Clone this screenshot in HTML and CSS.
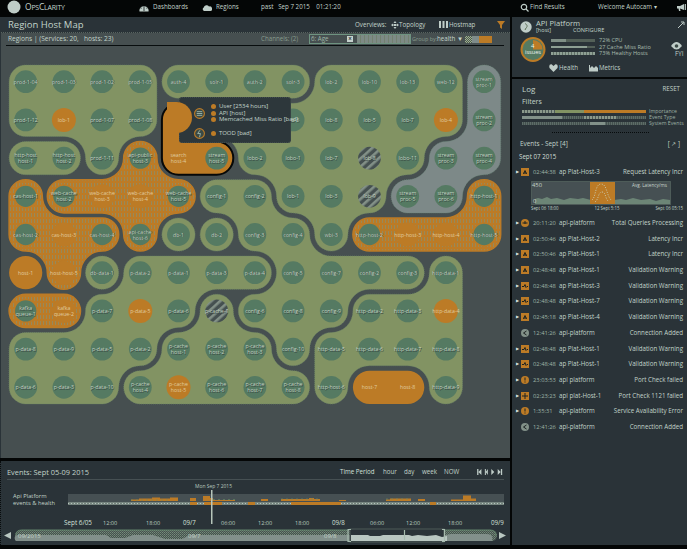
FILE: index.html
```html
<!DOCTYPE html>
<html lang="en">
<head>
<meta charset="utf-8">
<title>OpsClarity - Region Host Map</title>
<link rel="stylesheet" href="styles.css">
</head>
<body>
<div class="app">
  <header class="top">
    <svg class="logo" viewBox="0 0 14 14"><circle cx="7" cy="7" r="6.5"/></svg>
    <span class="brand">O<small>PS</small>C<small>LARITY</small></span>
    <svg class="ic" viewBox="0 0 10 9"><path d="M.5 8.5A4.6 4.6 0 1 1 9.5 8.5Z"/><path class="cut" d="M5 8V3M1.6 5.2h1M7.4 5.2h1M2.8 2.6l.6.7M7.2 2.6l-.6.7"/></svg>
    <span>Dashboards</span>
    <svg class="ic" viewBox="0 0 10 9"><path d="M2 8a2 2 0 0 1-.3-3.6A3 3 0 0 1 7 3.5 2.3 2.3 0 0 1 8.5 8Z"/></svg>
    <span>Regions</span>
    <span class="date">past &nbsp; Sep 7 2015 &nbsp;&nbsp; 01:21:20</span>
    <svg class="ic" viewBox="0 0 10 9"><circle class="line" cx="4" cy="4" r="2.7"/><path class="line" d="M6 6l2.5 2.5"/></svg>
    <span>Find Results</span>
    <span class="user">Welcome Autocam <b>▾</b></span>
    <svg class="ic" viewBox="0 0 10 9"><path d="M1 3h3l4-2v6L4 5.5 4.500 8H3L2.500 5.500H1Z"/><path class="line" d="M9.300 1v6"/></svg>
  </header>

  <main class="map-panel">
    <div class="title-bar">
      <h1>Region Host Map</h1>
      <span>Overviews:</span>
      <svg class="ic8" viewBox="0 0 8 8"><path d="M4 0l1.500 2H2.500zM4 8l1.500-2H2.500zM0 4l2-1.500v3zM8 4L6 2.500v3zM2.500 3h3v2h-3z"/></svg>
      <span>Topology</span>
      <svg class="ic8 wide" viewBox="0 0 9 7"><path d="M0 0h2v7H0zM3.500 0h2v7h-2zM7 0h2v7H7z"/></svg>
      <span>Hostmap</span>
      <svg class="ic8 funnel" viewBox="0 0 8 8"><path d="M0 0h8L5 4v4L3 6.500V4Z"/></svg>
    </div>
    <div class="sub-bar">
      <span class="crumb">Regions | (Services: 20, &nbsp; hosts: 23)</span>
      <span class="dim">Channels: (2)</span>
      <div class="search"><span>6: Age</span><b>×</b><i></i></div>
      <span class="dim">Group by:</span>
      <span>health ▼</span>
      <div class="swatches"><i class="s1"></i><i class="s2"></i><i class="s3"></i></div>
    </div>
    <div class="canvas">
      <svg id="map" width="510" height="409" viewBox="0 49 510 409">
        <defs>
          <pattern id="stripe" width="3" height="6" patternUnits="userSpaceOnUse"><rect width="3" height="6" fill="#bc7b26"/><rect x="1" width="1" height="4" fill="#97895a"/></pattern>
          <pattern id="slash" width="6" height="6" patternUnits="userSpaceOnUse" patternTransform="rotate(48)"><rect width="6" height="6" fill="#455050"/><rect width="2.600" height="6" fill="#829087"/></pattern>
        </defs>
      </svg>
      <div class="tooltip">
        <svg viewBox="0 0 14 14"><circle class="ring" cx="7" cy="7" r="5.300"/><path class="mark" d="M4 5h6M4 7h6M4 9h6"/></svg>
        <ul><li>User [2534 hours]</li><li>API [host]</li><li>Memcached Miss Ratio [bad]</li></ul>
        <svg viewBox="0 0 14 14"><circle class="ring" cx="7" cy="7" r="5.300"/><path class="mark" d="M7.500 3.500L5 7h3l-1 4"/></svg>
        <ul><li>TOOD [bad]</li></ul>
      </div>
    </div>
  </main>

  <section class="timeline">
    <div class="tl-head">
      <h2>Events: Sept 05-09 2015</h2>
      <span class="period">Time Period</span><span>hour</span><span>day</span><span>week</span><span>NOW</span>
      <svg class="ctrl" viewBox="0 0 30 7"><path d="M0 0h1.500v7H0zM5 0v7L1.500 3.500zM9 0h1.200v7H9zM12.500 0v7L10 3.500zM16.500 0v7L20 3.500zM24 0v7l3.500-3.500zM27.700 0h1.500v7h-1.500z"/></svg>
    </div>
    <div class="tl-body">
      <div class="tl-label">Api Platform<br>events &amp; health</div>
      <svg class="chart" width="436" height="46" viewBox="0 0 436 46">
        <rect class="band" y="11" width="436" height="8"/>
        <rect class="base" y="19" width="436" height="3"/>
        <path class="dots" d="M0 20.500H436"/>
        <path class="hot" d="M63 18v-1.500h8v-1h13v-1h8v1h10v-1h8v3.500zM122 18v-3h6v3zM135 18v-5h7v2h3v2h22v1zM193 18v-2h7v2zM213 18v-2h28v-1h5v1h6v2zM271 18v-1h7v1zM318 18v-1.500h4v-1h21v2.500zM350 18v-2h7v2zM383 18v-1.500h12v-4h8v3h5v2.500z"/>
        <path class="hot" d="M122 19h7v3h-7zM136 19h18v3h-18zM180 19h7v3h-7zM223 19h50v3h-50zM362 19h6v3h-6z"/>
        <path class="greenline" d="M63 17h40M145 16.500h22M318 16h24M213 16h38"/>
        <rect class="cursor" x="143" y="7" width="1.500" height="34"/>
        <text x="127" y="5" textLength="37" lengthAdjust="spacingAndGlyphs">Mon Sep 7 2015</text>
        <g class="ticks">
          <text class="day" x="-4" y="42" textLength="28" lengthAdjust="spacingAndGlyphs">Sept 6/05</text><text x="35" y="42">12:00</text><text x="78" y="42">18:00</text><text class="day" x="115" y="42">09/7</text><text x="153" y="42">06:00</text><text x="190" y="42">12:00</text><text x="227" y="42">18:00</text><text class="day" x="264" y="42">09/8</text><text x="302" y="42">06:00</text><text x="338" y="42">12:00</text><text x="380" y="42">18:00</text><text class="day" x="423" y="42">09/9</text>
        </g>
      </svg>
    </div>
    <svg class="scrub" width="510" height="17" viewBox="0 0 510 17">
      <defs><pattern id="check" width="2" height="2" patternUnits="userSpaceOnUse"><rect width="2" height="2" fill="#46514e"/><rect width="1" height="1" fill="#758d7b"/><rect x="1" y="1" width="1" height="1" fill="#65796c"/></pattern></defs>
      <rect x="15" y="2" width="482" height="11" rx="5.500" fill="url(#check)"/>
      <path class="area" d="M16 13c-2-2-2-6 2-6h88l5 3h14l8-3h20l12 4h17l8-4h165v6zM391 13V8h50l10-2h35q8 0 6 7Z"/>
      <path class="edge" d="M16 7q0-5 6-5H347M445 2h45q6 0 6 6"/>
      <rect x="350" y="1" width="94" height="13" class="window"/>
      <path class="light" d="M351 13V7h17l2 1h10l3-1h26l3 1 6-1 9 1 9-1 6 2 5-1v5z"/>
      <path class="pin" d="M404.500 2v10M351 1.500h-3v12h3M442 1.500h2.500v12H442"/>
      <path class="light" d="M4 7.500L11 4v7zM499 4l7 3.500-7 3.500z"/>
      <text x="18" y="10">09/2015</text><text x="188" y="10">09/7</text><text x="324" y="10">09/8</text>
    </svg>
  </section>

  <aside class="side">
    <section class="service">
      <div class="svc-head">
        <svg width="12" height="12" viewBox="0 0 12 12"><circle cx="6" cy="6" r="5.700"/><path class="tick" d="M5 2.500c2 1 3 3 1 4.500L5 9"/></svg>
        <div><div class="svc-name">API Platform</div><div class="svc-sub"><span>[host]</span><span>CONFIGURE</span></div></div>
        <svg class="expand" width="8" height="8" viewBox="0 0 8 8"><path d="M1 7l5.500-5.500M4 1h3v3"/></svg>
      </div>
      <div class="svc-body">
        <svg width="26" height="27" viewBox="0 0 26 27"><circle class="g1" cx="13" cy="13.500" r="11.500"/><path class="g2" d="M13 13.500V4a9.500 9.500 0 0 1 9.500 9.500z"/><text x="11" y="12">4</text><text x="5" y="18" textLength="16" lengthAdjust="spacingAndGlyphs">issues</text></svg>
        <div class="meters"><i class="m1"></i><i class="m2"></i><i class="m3"></i></div>
        <div class="m-labels">72% CPU<br>27 Cache Miss Ratio<br>73% Healthy Hosts</div>
        <div class="watch"><svg width="11" height="8" viewBox="0 0 11 8"><path d="M0 4Q5.500-4 11 4 5.500 11 0 4Z"/><circle cx="5.500" cy="4" r="1.800"/></svg><span>FYI</span></div>
      </div>
      <div class="svc-tabs">
        <svg width="9" height="8" viewBox="0 0 9 8"><path d="M4.500 8L.5 4Q-.5 0 2.500.3L4.500 2 6.500.3Q9.500 0 8.500 4Z"/></svg><span>Health</span>
        <svg width="9" height="8" viewBox="0 0 9 8"><path d="M0 1v6.500h9V4L7 2 5 4 3 2 1 4V1Z"/></svg><span>Metrics</span>
      </div>
    </section>
    <section class="log">
      <div class="log-title"><h2>Log</h2><span>RESET</span></div>
      <h3>Filters</h3>
      <div class="filters">
        <div class="bar f1"><i></i><i></i><i></i></div><span>Importance</span>
        <div class="bar f2"><i></i><i></i><i></i><i></i></div><span>Event Type</span>
        <div class="bar f3"><i></i><i></i><i></i></div><span>System Events</span>
      </div>
      <div class="rule"></div>
      <div class="ev-title"><b>Events - Sept [4]</b><span>[ ↗ ]</span></div>
      <div class="ev-date">Sept 07 2015</div>
      <div class="events" id="events"></div>
      <template id="spark">
        <div class="spark">
          <svg width="140" height="24" viewBox="0 0 140 24">
            <rect class="sbg" x=".5" y=".5" width="139" height="23"/>
            <path class="grass" d="M4 23v-5l3-1 4 1 5-2 4 2 6-1 7 2 6-2 8 1 5-1 8 2v4zM83 23v-4l7-1 5 1 7-2 8 2 9-1 6 2 7-2 7 1v4z"/>
            <rect class="peak" x="59" y="1" width="25" height="22"/>
            <path class="curve" d="M61 19c4-3 3-16 9-16s5 10 10 16M64 21c4-3 3-10 7-10s3 6 6 9"/>
            <text x="1" y="6">450</text><text x="2" y="22">0</text><text x="101" y="6" textLength="35" lengthAdjust="spacingAndGlyphs">Avg. Latency/ms</text>
          </svg>
          <div class="spark-axis"><span>Sept 06 18:00</span><span>12 Sept 5:15</span><span>Sept 06 05:15</span></div>
        </div>
      </template>
    </section>
  </aside>
</div>
<script src="app.js"></script>
</body>
</html>
```
FILE: styles.css
```css
* { box-sizing: border-box; }
body { margin: 0; background: #040606; color: #c2d3ca; font: 6.2px/8px "Open Sans", "Noto Sans", sans-serif; overflow: hidden; }
h1, h2, h3, ul { margin: 0; padding: 0; font-weight: 400; }
svg { display: block; }
svg path, svg circle { fill: #bfcdc8; }
.app { width: 687px; height: 549px; display: grid; grid-template-columns: 510px 175px; grid-template-rows: 17px 441px 87px; column-gap: 2px; row-gap: 0; white-space: nowrap; }
.top { grid-column: 1 / 3; display: grid; grid-template-columns: 18px 114px 14px 49px 14px 45px 259px 10px 68px 78px 12px; padding-left: 7px; align-items: center; padding-bottom: 3px; }
.logo { width: 14px; height: 14px; }
.brand { font-size: 8.500px; letter-spacing: -.25px; }
.brand small { font-size: 7px; }
.ic { width: 10px; height: 9px; }
.ic .cut { fill: none; stroke: #121819; stroke-width: .8; }
.ic .line { fill: none; stroke: #bfcdc8; stroke-width: 1.200; }
.user b { font-weight: 400; }

.map-panel { background: #464f50; border-left: 1px solid #2a3338; }
.title-bar { height: 16px; background: #2a3338; display: grid; grid-template-columns: 347px 36px 8px 40px 10px 48px 10px; padding-left: 7px; align-items: center; border-bottom: 1px dotted #59645f; }
h1 { font-size: 9.500px; line-height: 14px; }
.ic8 { width: 8px; height: 8px; }
.ic8.wide { width: 9px; height: 7px; }
.funnel path { fill: #bc7b26; }
.sub-bar { height: 13px; display: grid; grid-template-columns: 253px 48px 103px 25px 28px 28px; margin: 0 6px 0 5px; padding-left: 2px; align-items: center; border-bottom: 1.500px solid #080d0e; }
.crumb { font-size: 6.600px; }
.dim { color: #879b8d; }
.search { width: 102px; height: 10px; border: 1px solid #6e9380; display: flex; align-items: center; color: #9eb5a6; }
.search span { width: 37px; padding-left: 1px; }
.search b { width: 6px; height: 6px; background: #c5d1cd; color: #303a3b; line-height: 6px; text-align: center; }
.search i { flex: 1; margin-left: 4px; height: 8px; background: repeating-linear-gradient(90deg, #7d8a85 0 3px, #72806f 3px 4px); }
.sub-bar .dim:nth-of-type(3) { font-size: 5.500px; }
.swatches { display: flex; height: 7px; margin-left: 0; }
.swatches i { width: 7px; }
.swatches .s1 { background: repeating-conic-gradient(#9fb18c 0 25%, #4b5853 0 50%) 0 0 / 2px 2px; }
.swatches .s2 { background: #7f8c8a; }
.swatches .s3 { width: 13px; background: #bc7b26; }
.canvas { position: relative; margin-left: -1px; height: 409px; overflow: hidden; }
.region-green { fill: #829363 !important; stroke: #6c8767; stroke-width: .7; stroke-dasharray: 1 1; }
.region-grey { fill: #7d8988 !important; stroke: #6c8a7a; stroke-width: .7; stroke-dasharray: 1 1; }
.region-stripe { fill: url(#stripe) !important; stroke: #bc7b26; stroke-width: 1.500; }
.region-solid { fill: #bc7b26 !important; }
.region-picked { fill: #bc7b26 !important; stroke: #060808; stroke-width: 2; }
#map .n { fill: #557a62; }
#map .nr { fill: #557a62; stroke: #bc7b26; stroke-width: 1.500; }
#map .w { fill: #bc7b26; }
#map .x { fill: url(#slash); }
#map text { font-size: 5.200px; text-anchor: middle; fill: #c4d4c5; text-shadow: .6px .8px 0 #33423d; }
#map text.hot { text-shadow: none; fill: #e0cda0; }
.tooltip { position: absolute; left: 179px; top: 51px; width: 112px; height: 46px; border-radius: 3px; background: #2d373b; border: 1px dotted #414c4d; display: grid; grid-template-columns: 14px 1fr; grid-template-rows: 22px 14px; column-gap: 4px; padding: 4px 0 0 13px; align-content: start; row-gap: 2px; align-items: center; }
.tooltip::before { content: ""; position: absolute; left: -13px; top: 4px; width: 25px; height: 31px; border-radius: 0 16px 16px 0; background: #bc7b26; }
.tooltip svg { width: 13px; height: 13px; position: relative; }
.tooltip .ring { fill: #3a4a46; stroke: #bc7b26; stroke-width: 1.200; }
.tooltip .mark { fill: none; stroke: #9db5a7; stroke-width: 1; }
.tooltip ul { list-style: none; line-height: 6.800px; font-size: 6px; letter-spacing: -.05px; }
.tooltip li::before { content: ""; display: inline-block; width: 5px; height: 5px; border-radius: 50%; background: #bc7b26; margin-right: 3px; vertical-align: -1px; }

.timeline { grid-row: 3; background: #2a3338; margin-top: 3px; border-left: 1px dotted #080c0d; }
.tl-head { height: 19px; display: grid; grid-template-columns: 333px 43px 21px 18px 22px 31px 30px; margin: 0 6px; align-items: center; border-bottom: 1px solid #465053; padding-top: 3px; }
.tl-head h2 { font-size: 7.400px; }
.tl-head .period { color: #d5e1da; }
.ctrl { width: 30px; height: 6px; }
.tl-body { display: flex; height: 48px; padding-top: 3px; }
.tl-label { width: 67px; padding: 10px 0 0 12px; line-height: 6.500px; font-size: 5.800px; }
.chart .band { fill: #465053; }
.chart .base { fill: #76857f; }
.chart .dots { stroke: #b8c5bf; stroke-width: 1; stroke-dasharray: 1 2; }
.chart path.hot { fill: #bc7b26; }
.chart .greenline { stroke: #688e68; stroke-width: .6; stroke-dasharray: 2 3; fill: none; }
.cursor { fill: #b6c6ba; }
.chart { overflow: visible; }
.chart text { font-size: 5.600px; fill: #b8c9bf; }
.chart .day { fill: #d5e1da; font-size: 6.200px; }
.scrub { margin-left: -1px; margin-top: 0; }
.scrub .area { fill: #82908b; }
.scrub .edge { fill: none; stroke: #60836a; }
.scrub .window { fill: #2a3338; stroke: #4d5a57; }
.scrub .light { fill: #b9c7c1; }
.scrub .pin { fill: none; stroke: #a6bbae; stroke-width: 1.200; }
.scrub text { font-size: 6px; fill: #c4d5c9; }

.side { grid-column: 2; grid-row: 2 / 4; display: flex; flex-direction: column; gap: 2px; }
.service { height: 60px; background: #2a3338; padding: 2px 0 0 8px; }
.svc-head { display: grid; grid-template-columns: 16px 141px 8px; height: 17px; align-items: start; padding-top: 1px; }
.svc-head svg { margin-top: 1px; }
.svc-head .tick { fill: none; stroke: #5b7055; }
.svc-name { font-size: 7.600px; line-height: 7px; }
.svc-sub { display: grid; grid-template-columns: 37px 1fr; font-size: 5.600px; line-height: 7px; }
.expand path { fill: none !important; stroke: #bfcdc8; }
.svc-body { display: grid; grid-template-columns: 31px 48px 74px 16px; height: 26px; }
.svc-body .g1 { fill: #557a62; stroke: #bc7b26; stroke-width: 2; }
.svc-body .g2 { fill: #bc7b26; }
.svc-body text { font-size: 6px; fill: #eef3ee; }
.meters { display: flex; flex-direction: column; gap: 4px; padding-top: 3px; width: 44px; }
.meters i { height: 2.600px; }
.m1 { background: linear-gradient(90deg, #7f8f86 33%, #536058 33%); }
.m2 { background: linear-gradient(90deg, #8ea094 82%, #536058 82%); }
.m3 { background: repeating-linear-gradient(90deg, #8ea094 0 2px, #617066 2px 3px); }
.m-labels { font-size: 5.600px; line-height: 6.600px; padding-top: 1px; color: #a8bdae; }
.watch { padding-top: 6px; margin-left: -2px; line-height: 7px; }
.watch svg circle { fill: #3b4a46; }
.watch span { padding-left: 4px; }
.svc-tabs { display: grid; grid-template-columns: 10px 30px 10px 30px; padding-left: 29px; margin-top: 2px; align-items: center; }
.log { flex: 1; background: #2a3338; padding: 4px 0 0 10px; }
.log-title { display: flex; justify-content: space-between; padding-right: 7px; height: 15px; line-height: 11px; }
.log-title h2 { font-size: 8px; }
.log h3 { font-size: 7px; line-height: 8px; height: 10px; }
.filters { display: grid; grid-template-columns: 124px 1fr; column-gap: 3px; row-gap: 0; height: 19px; line-height: 6px; grid-auto-rows: 6px; font-size: 5.200px; align-items: center; color: #9eb2a5; overflow: hidden; }
.bar { display: grid; height: 3px; }
.f1 { grid-template-columns: 33px 29px 62px; }
.f1 i:nth-child(1), .f2 i:nth-child(3) { background: repeating-linear-gradient(90deg, #8b998b 0 2px, #4f5c5a 2px 3px); }
.f1 i:nth-child(2) { background: #829363; }
.f1 i:nth-child(3) { background: #bc7b26; }
.f2 { grid-template-columns: 40px 22px 33px 29px; }
.f2 i:nth-child(1), .f3 i:nth-child(2) { background: #829189; }
.f2 i:nth-child(2), .f2 i:nth-child(4), .f3 i { background: repeating-linear-gradient(90deg, #5c6c67 0 1px, #45514f 1px 2px); }
.f3 { grid-template-columns: 68px 15px 41px; }
.rule { width: 97px; margin: 5px 0 0 30px; border-top: 1px dotted #070b0c; }
.ev-title { margin: 7px 7px 0 -2px; display: flex; justify-content: space-between; line-height: 8px; }
.ev-title b { font-weight: 400; font-size: 6.400px; }
.ev-date { margin: 5px 0 0 -3px; font-size: 6.200px; color: #d2ded6; }
.events { margin: 3px 4px 0 -6px; }
.event { display: grid; grid-template-columns: 5px 12px 26px 50px 1fr; height: 15.700px; align-items: center; }
.event .arrow { font-size: 4px; color: #dae3df; }
.event .arrow.none { visibility: hidden; }
.event svg { width: 8px; height: 8px; }
.event time { color: #9fb3a7; font-size: 5.800px; }
.event .what { text-align: right; }
.event .hot { fill: #bc7b26; }
.event .info { fill: #829189; }
.event .glyph { fill: none; stroke: #1b2222; stroke-width: 1; }
.spark { margin: 1px 0 0 15px; height: 34.500px; }
.spark svg { width: 140px; height: 24px; }
.spark .sbg { fill: #465053; stroke: #71877a; stroke-width: .8; stroke-dasharray: 1 1; }
.spark .grass { fill: #6c8576; }
.spark .peak { fill: #bc7b26; }
.spark .curve { fill: none; stroke: #ccd2ba; stroke-width: .9; stroke-dasharray: 1 1.500; }
.spark text { font-size: 5.800px; fill: #c7d5cc; }
.spark-axis { display: flex; justify-content: space-between; font-size: 4.400px; line-height: 6px; }
```
FILE: app.js
```javascript
const NS = 'http://www.w3.org/2000/svg';
const map = document.getElementById('map');
const PITCH = 38.2, X0 = 6.6, Y0 = 65.6, INSET = 2.5;

// One letter per cell; equal letters form one region.
const cells = [
  'AAAABBBBCCCCG',
  'AAAAHCCCCCCCG',
  'DDAEHHCCCCCGG',
  'OEEEEKKCCCGGL',
  'OOOEIJKKCLLLL',
  'MONPPPPKKKKQ.',
  'RRPPPSKKKQQQ.',
  'PPPPSSSKQQQQ.',
  'PPPSSSSSQTTQ.'
];
const kind = { G: 'grey', H: 'picked', E: 'stripe', O: 'stripe', L: 'stripe', R: 'stripe', M: 'solid', T: 'solid' };

// w: warning node, x: hatched node, o: no separate fill, n: normal node
const state = [
  'nnnnnnnnnnnnn',
  'nwnnwoonnnnwn',
  'nnnnonnnnxnnn',
  'nnwwnnnnnxnnn',
  'nwnnnnnnnnwwn',
  'owwnnnnnnnnn.'.replace('oww', 'own'),
  'nwnwnxnnnnnw.',
  'nnnnnnnnnnnn.',
  'nnnnwnnnnoon.'
];
const labels = [
  'prod-1-04|prod-1-03|prod-1-02|prod-1-05|auth-4|solr-1|auth-2|solr-3|lob-2|lob-10|lob-13|web-12|stream/proc-1',
  'prod-1-12|lob-1|prod-1-07|prod-1-08|api-1|||lob-6|lob-8|lob-5|lob-7|lob-4|stream/proc-2',
  'http-host/host-1|http-host/host-2|prod-1-11|api-public/host-3|search/host-4|stream/host-5|lobo-2|lobo-1|lob-7|lob-8|lobo-11|stream/proc-3|stream/proc-4',
  'cas-host-1|web-cache/host-2|web-cache/host-3|web-cache/host-4|web-cache/host-5|config-1|config-2|lob-1|lob-3|lob-9|stream/proc-5|stream/proc-6|http-host-1',
  'cas-host-2|cas-host-3|cas-host-4|api-cache/host-6|db-1|db-2|config-3|config-4|wbi-3|http-host-2|http-host-3|http-host-4|http-host-5',
  'host-1|host-host-5|db-data-1|p-data-2|p-data-1|p-data-3|p-data-4|config-5|config-7|config-2|config-3|http-data-1|',
  'kafka/queue-1|kafka/queue-2|p-data-7|p-data-5|p-data-6|p-cache-1|config-6|config-8|config-9|http-data-2|http-data-3|http-data-4|',
  'p-data-8|p-data-9|p-data-5|p-data-2|p-cache/host-1|p-cache/host-2|p-cache/host-3|config-10|http-data-5|http-data-6|http-data-7|http-data-8|',
  'p-data-6|p-data-3|p-data-10|p-cache/host-4|p-cache/host-5|p-cache/host-6|p-cache/host-7|p-cache/host-8|http-host-6|host-7|host-8|http-data-9|'
].map(r => r.split('|'));

function make(tag, attrs, text) {
  const el = document.createElementNS(NS, tag);
  for (const k in attrs) el.setAttribute(k, attrs[k]);
  if (text) el.textContent = text;
  map.appendChild(el);
}

// Clockwise outline of a region, inset from the grid and rounded at each turn.
function outline(id) {
  const has = (c, r) => (cells[r] || '')[c] === id;
  const edges = new Map();
  const add = (x, y, dx, dy) => {
    const k = x + ',' + y;
    if (!edges.has(k)) edges.set(k, []);
    edges.get(k).push([x, y, dx, dy]);
  };
  cells.forEach((row, r) => [...row].forEach((ch, c) => {
    if (ch !== id) return;
    if (!has(c, r - 1)) add(c, r, 1, 0);
    if (!has(c + 1, r)) add(c + 1, r, 0, 1);
    if (!has(c, r + 1)) add(c + 1, r + 1, -1, 0);
    if (!has(c - 1, r)) add(c, r + 1, 0, -1);
  }));
  let d = '';
  while (edges.size) {
    const first = edges.values().next().value[0];
    const loop = [];
    let e = first;
    do {
      const k = e[0] + ',' + e[1], list = edges.get(k);
      list.splice(list.indexOf(e), 1);
      if (!list.length) edges.delete(k);
      loop.push(e);
      const next = edges.get((e[0] + e[2]) + ',' + (e[1] + e[3]));
      if (!next) break;
      e = next.find(n => e[2] * n[3] - e[3] * n[2] > 0) || next[0];
    } while (e);
    let part = '';
    loop.forEach((b, i) => {
      const a = loop[(i + loop.length - 1) % loop.length];
      const turn = a[2] * b[3] - a[3] * b[2];
      if (!turn) return;
      const px = X0 + b[0] * PITCH + INSET * (-a[3] - b[3]);
      const py = Y0 + b[1] * PITCH + INSET * (a[2] + b[2]);
      const rad = PITCH / 2 + (turn > 0 ? -INSET : INSET);
      part += `${part ? 'L' : 'M'}${px - a[2] * rad} ${py - a[3] * rad}A${rad} ${rad} 0 0 ${turn > 0 ? 1 : 0} ${px + b[2] * rad} ${py + b[3] * rad}`;
    });
    d += part + 'Z';
  }
  return d;
}

new Set(cells.join('').replace(/\./g, '')).forEach(id =>
  make('path', { d: outline(id), class: 'region-' + (kind[id] || 'green') }));

cells.forEach((row, r) => [...row].forEach((ch, c) => {
  if (ch === '.') return;
  const x = X0 + (c + .5) * PITCH, y = Y0 + (r + .5) * PITCH, s = state[r][c];
  const striped = kind[ch] === 'stripe';
  if (s !== 'o') make('circle', { cx: x, cy: y, r: s === 'w' ? 12 : 11.4, class: s === 'n' && striped ? 'nr' : s });
  const lines = labels[r][c].split('/');
  lines.forEach((t, i) => make('text', { x, y: y + 2 + (i - (lines.length - 1) / 2) * 6, class: s === 'w' || s === 'o' ? 'hot' : '' }, t));
}));

const glyphs = {
  a: '<rect class="hot" width="8" height="8"/><path class="glyph" d="M2.500 6L4 2.500 5.500 6M2.500 5h3"/>',
  p: '<rect class="hot" width="8" height="8"/><path class="glyph" d="M1 4.500h2l1-2 1 3 1-1h1"/>',
  c: '<circle class="hot" cx="4" cy="4" r="4"/><path class="glyph" d="M1.500 4h5M4 2v3"/>',
  i: '<circle class="hot" cx="4" cy="4" r="4"/><path class="glyph" d="M4 1.500v3M4 5.500v1"/>',
  x: '<rect class="hot" width="8" height="8"/><path class="glyph" d="M4 1v6M1 4h6" stroke-width="2"/>',
  s: '<circle class="info" cx="4" cy="4" r="4"/><path class="glyph" d="M5.500 2L2.500 4l3 2"/>'
};
const events = [
  ['a', '02:44:38', 'ap Plat-Host-3', 'Request Latency Incr'],
  ['c', '20:11:20', 'api-platform', 'Total Queries Processing'],
  ['a', '02:50:46', 'ap Plat-Host-2', 'Latency Incr'],
  ['a', '02:50:46', 'ap Plat-Host-1', 'Latency Incr'],
  ['a', '02:48:48', 'ap Plat-Host-1', 'Validation Warning'],
  ['p', '02:48:48', 'ap Plat-Host-3', 'Validation Warning'],
  ['p', '02:48:48', 'ap Plat-Host-7', 'Validation Warning'],
  ['a', '02:45:18', 'ap Plat-Host-4', 'Validation Warning'],
  ['s', '12:41:26', 'api-platform', 'Connection Added'],
  ['p', '02:48:48', 'ap Plat-Host-1', 'Validation Warning'],
  ['p', '02:48:48', 'ap Plat-Host-1', 'Validation Warning'],
  ['i', '23:03:53', 'api platform', 'Port Check failed'],
  ['x', '02:23:23', 'api plat-Host-1', 'Port Check 1121 failed'],
  ['i', '1:35:31', 'api-platform', 'Service Availability Error'],
  ['s', '12:41:26', 'api-platform', 'Connection Added']
];
const list = document.getElementById('events');
events.forEach(([g, t, host, what], i) => {
  list.insertAdjacentHTML('beforeend', `<div class="event"><span class="arrow${g === 's' ? ' none' : ''}">▶</span><svg viewBox="0 0 8 8">${glyphs[g]}</svg><time>${t}</time><span>${host}</span><span class="what">${what}</span></div>`);
  if (!i) list.appendChild(document.getElementById('spark').content.cloneNode(true));
});
```
